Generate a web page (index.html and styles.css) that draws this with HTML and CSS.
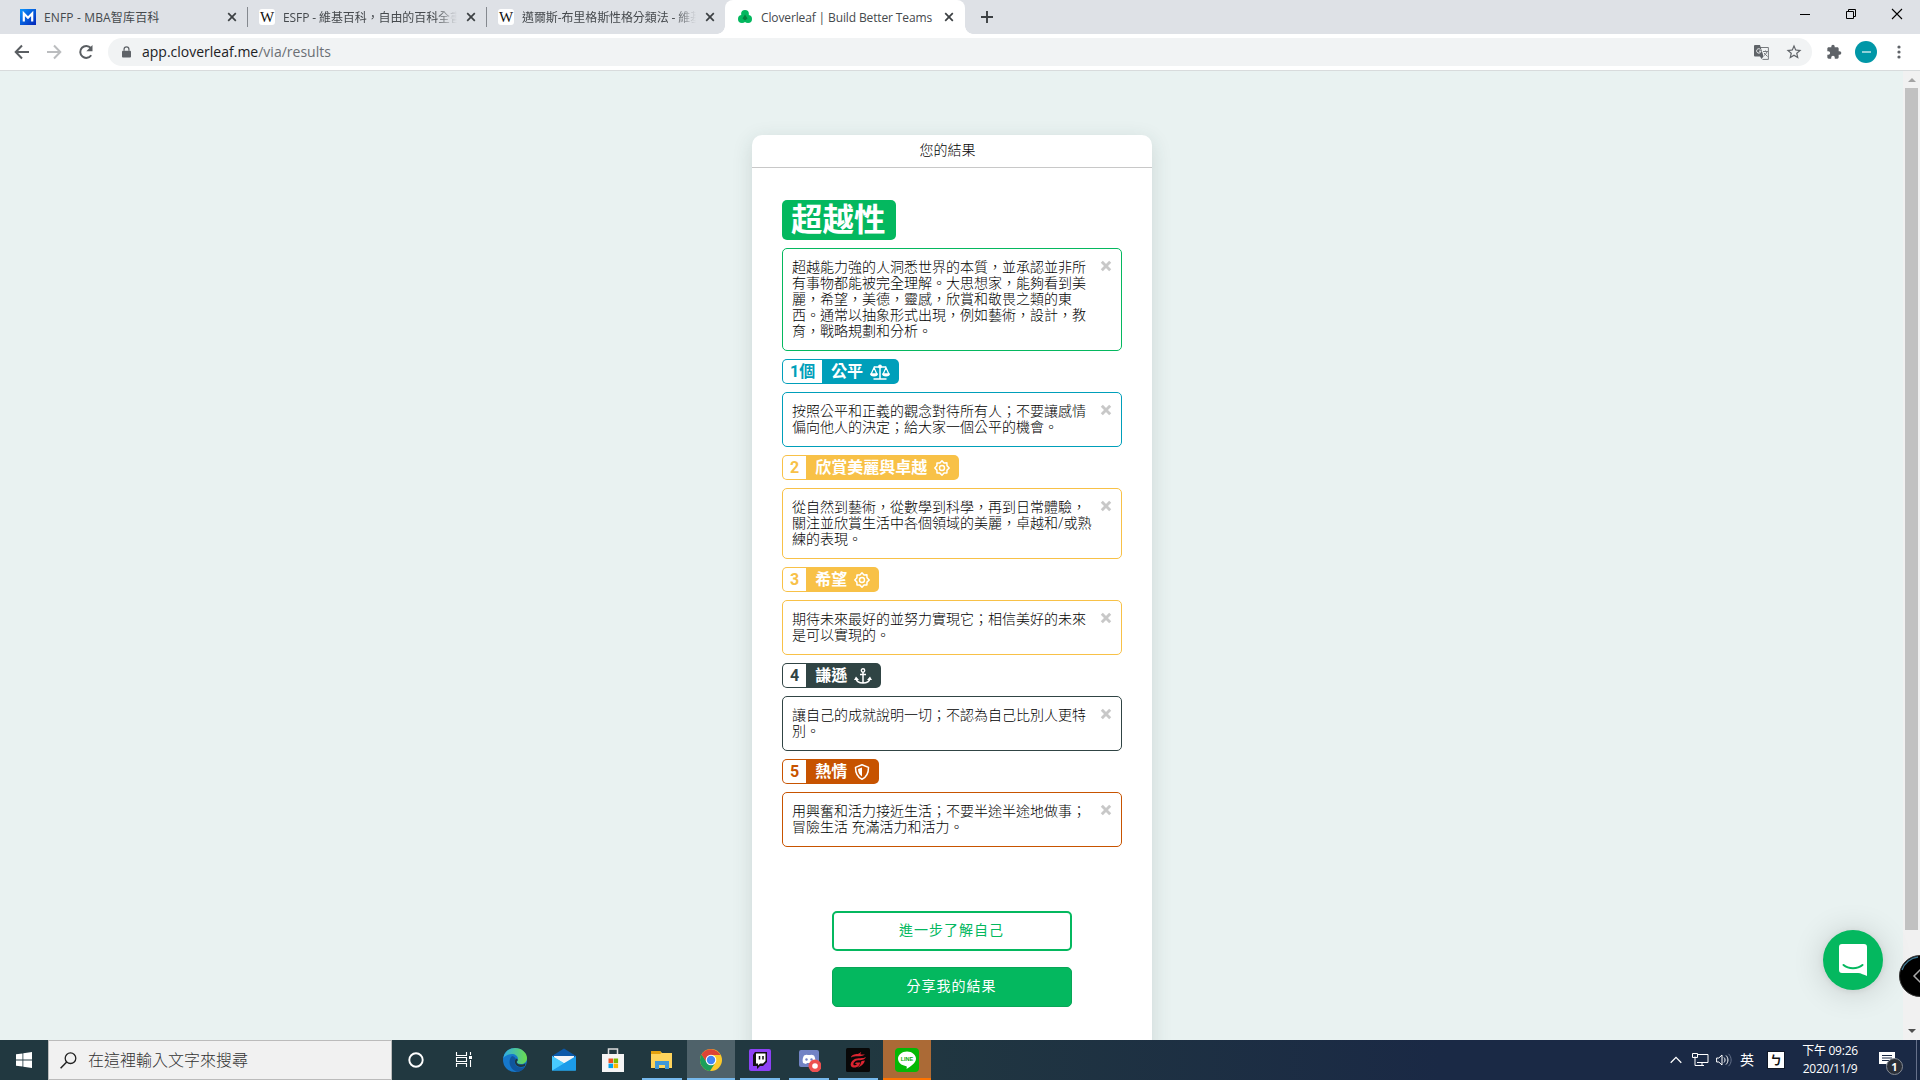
FILE: index.html
```html
<!DOCTYPE html>
<html lang="zh-Hant">
<head>
<meta charset="utf-8">
<title>Cloverleaf | Build Better Teams</title>
<link rel="stylesheet" href="styles.css">
</head>
<body>
<svg width="0" height="0" class="defs">
  <symbol id="x" viewBox="0 0 10 10"><path d="M1.2 1.2l7.6 7.6M8.8 1.2L1.2 8.8" fill="none" stroke="currentColor" stroke-width="1.7"/></symbol>
  <symbol id="bx" viewBox="0 0 12 12"><path d="M1.8 1.8l8.4 8.4M10.200 1.800L1.800 10.200" fill="none" stroke="#c8c8c8" stroke-width="2.900"/></symbol>
  <symbol id="gear" viewBox="0 0 16 16"><path d="M8 .8l2 2.100 2.900-.1.1 2.900L15.200 8 13 10.100l-.1 2.900-2.900.1-2 2.100-2.100-2.100-2.900-.1-.1-2.900L.8 8l2.100-2.200.1-2.900 2.900.1z" fill="none" stroke="#fff" stroke-width="1.500" stroke-linejoin="round"/><circle cx="8" cy="8" r="2.500" fill="none" stroke="#fff" stroke-width="1.400"/></symbol>
</svg>

<header class="tabs">
  <div class="tab t1">
    <svg class="fav" viewBox="0 0 16 16"><defs><linearGradient id="mb" x2="1" y2="1"><stop stop-color="#0a96ff"/><stop offset="1" stop-color="#0425b8"/></linearGradient></defs><path fill="url(#mb)" d="M0 0h16v16H0z"/><path d="M3.800 12.500v-8L8 8.800l4.200-4.300v8" fill="none" stroke="#fff" stroke-width="2.200"/></svg>
    <span class="label">ENFP - MBA智库百科</span><svg class="close"><use href="#x"/></svg>
  </div>
  <div class="tab t2"><span class="fav wiki">W</span><span class="label fade">ESFP - 維基百科，自由的百科全書</span><svg class="close"><use href="#x"/></svg></div>
  <div class="tab t3"><span class="fav wiki">W</span><span class="label fade">邁爾斯-布里格斯性格分類法 - 維基</span><svg class="close"><use href="#x"/></svg></div>
  <div class="tab active">
    <svg class="fav" viewBox="0 0 16 16"><g fill="#04b85f"><circle cx="8" cy="5" r="3.900"/><circle cx="5" cy="10" r="4"/><circle cx="11" cy="10" r="4"/><path d="M5 7h6v4H5z"/></g><path d="M8 5.500l2.500 4-2.500 2-2.500-2z" fill="#06803f"/></svg>
    <span class="label latin">Cloverleaf | Build Better Teams</span><svg class="close"><use href="#x"/></svg>
  </div>
  <svg class="plus" viewBox="0 0 12 12"><path d="M6 0v12M0 6h12" stroke="#3c4043" stroke-width="1.900"/></svg>
  <div class="winbtns">
    <svg viewBox="0 0 12 12"><path d="M1 6.500h10" stroke="#000"/></svg>
    <svg viewBox="0 0 12 12"><path d="M1.500 3.500h7v7h-7zM3.500 3.500v-2h7v7h-2" fill="none" stroke="#000"/></svg>
    <svg viewBox="0 0 12 12"><path d="M1 1l10 10M11 1L1 11" stroke="#000" stroke-width="1.100"/></svg>
  </div>
</header>

<div class="toolbar">
  <svg class="nav" viewBox="0 0 16 16"><path d="M15 8H2.500M8 1.500L1.700 8 8 14.500" fill="none" stroke="#5a5e62" stroke-width="2"/></svg>
  <svg class="nav" viewBox="0 0 16 16"><path d="M1 8h12.500M8 1.500L14.300 8 8 14.500" fill="none" stroke="#bbbdbf" stroke-width="2"/></svg>
  <svg class="nav" viewBox="0 0 16 16"><path d="M13.200 11.300A6 6 0 1 1 12.800 4" fill="none" stroke="#5a5e62" stroke-width="2"/><path d="M14.500 1v6.200H8.300z" fill="#5a5e62"/></svg>
  <div class="omnibox">
    <svg class="lock" viewBox="0 0 10 13"><path d="M1 5h8a1 1 0 0 1 1 1v5.500a1 1 0 0 1-1 1H1a1 1 0 0 1-1-1V6a1 1 0 0 1 1-1z" fill="#5f6368"/><path d="M2.300 5V3.500a2.700 2.700 0 0 1 5.400 0V5" fill="none" stroke="#5f6368" stroke-width="1.400"/></svg>
    <span class="url">app.cloverleaf.me<i>/via/results</i></span>
    <svg class="translate" viewBox="0 0 15 15"><path d="M5 2.500h9.400v11.900H8.500" fill="none" stroke="#777a7e"/><path d="M1 0h5l3.600 11.500H1a1 1 0 0 1-1-1V1a1 1 0 0 1 1-1zM6 11.500h3.500L7.500 14z" fill="#5f6368"/><path d="M6.500 4.500A2.200 2.200 0 1 0 7 6.200H5" stroke="#f1f3f4" fill="none"/><path d="M9 6.500h5M11.500 5.500v1M13 6.500c-.5 2-2 3.500-3 4M10 8l3.500 3.500" stroke="#777a7e" fill="none"/></svg>
    <svg class="star" viewBox="0 0 24 24"><path d="M22 9.240l-7.190-.62L12 2 9.190 8.630 2 9.240l5.460 4.730L5.820 21 12 17.270 18.180 21l-1.630-7.030L22 9.240zM12 15.400l-3.760 2.270 1-4.280-3.320-2.880 4.380-.38L12 6.100l1.710 4.040 4.380.38-3.320 2.880 1 4.280L12 15.400z" fill="#5f6368"/></svg>
  </div>
  <svg class="puzzle" viewBox="0 0 24 24"><path d="M20.500 11H19V7c0-1.100-.9-2-2-2h-4V3.500a2.500 2.500 0 0 0-5 0V5H4c-1.100 0-2 .9-2 2v3.800h1.500a2.700 2.700 0 0 1 0 5.400H2V20c0 1.100.9 2 2 2h3.800v-1.500a2.700 2.700 0 0 1 5.400 0V22H17c1.100 0 2-.9 2-2v-4h1.500a2.500 2.500 0 0 0 0-5z" fill="#5f6368"/></svg>
  <span class="avatar"></span>
  <svg class="dots" viewBox="0 0 4 14"><g fill="#5f6368"><circle cx="2" cy="2" r="1.600"/><circle cx="2" cy="7" r="1.600"/><circle cx="2" cy="12" r="1.600"/></g></svg>
</div>

<main class="page">
  <section class="card">
    <h1 class="cardhead">您的結果</h1>
    <div class="content">
      <div class="virtue">超越性</div>
      <div class="box green"><p>超越能力強的人洞悉世界的本質，並承認並非所<br>有事物都能被完全理解。大思想家，能夠看到美<br>麗，希望，美德，靈感，欣賞和敬畏之類的東<br>西。通常以抽象形式出現，例如藝術，設計，教<br>育，戰略規劃和分析。</p><svg class="dismiss"><use href="#bx"/></svg></div>
      <div class="badge teal"><b>1個</b><span>公平</span><svg class="w20" viewBox="0 0 20 16"><path d="M10 2v12.500M3.500 15h13M4 3h12" stroke="#fff" stroke-width="1.500"/><circle cx="10" cy="2.500" r="1.900" fill="#fff"/><path d="M4 3.500L1.200 10h5.600zM16 3.500L13.200 10h5.600z" fill="none" stroke="#fff" stroke-width="1.200"/><path d="M0 9.500h8a4 3 0 0 1-8 0zM12 9.500h8a4 3 0 0 1-8 0z" fill="#fff"/></svg></div>
      <div class="box teal"><p>按照公平和正義的觀念對待所有人；不要讓感情<br>偏向他人的決定；給大家一個公平的機會。</p><svg class="dismiss"><use href="#bx"/></svg></div>
      <div class="badge gold"><b>2</b><span>欣賞美麗與卓越</span><svg><use href="#gear"/></svg></div>
      <div class="box gold"><p>從自然到藝術，從數學到科學，再到日常體驗，<br>關注並欣賞生活中各個領域的美麗，卓越和/或熟<br>練的表現。</p><svg class="dismiss"><use href="#bx"/></svg></div>
      <div class="badge gold"><b>3</b><span>希望</span><svg><use href="#gear"/></svg></div>
      <div class="box gold"><p>期待未來最好的並努力實現它；相信美好的未來<br>是可以實現的。</p><svg class="dismiss"><use href="#bx"/></svg></div>
      <div class="badge dark"><b>4</b><span>謙遜</span><svg class="w18" viewBox="0 0 18 16"><circle cx="9" cy="2.400" r="1.700" fill="none" stroke="#fff" stroke-width="1.400"/><path d="M9 4v11M6 6.500h6M2 10.500c.6 3 3.500 4.500 7 4.500s6.400-1.500 7-4.500" fill="none" stroke="#fff" stroke-width="1.500"/><path d="M0 12l2-3.500L5 12zM18 12l-2-3.500L13 12z" fill="#fff"/></svg></div>
      <div class="box dark"><p>讓自己的成就說明一切；不認為自己比別人更特<br>別。</p><svg class="dismiss"><use href="#bx"/></svg></div>
      <div class="badge rust"><b>5</b><span>熱情</span><svg viewBox="0 0 16 16"><path d="M8 .8l6.500 2.600c0 6-2 9.700-6.500 11.800C3.500 13.100 1.500 9.400 1.500 3.400z" fill="none" stroke="#fff" stroke-width="1.500" stroke-linejoin="round"/><path d="M8 3.500v9C5.300 10.800 4.200 8.500 4 5z" fill="#fff"/></svg></div>
      <div class="box rust"><p>用興奮和活力接近生活；不要半途半途地做事；<br>冒險生活 充滿活力和活力。</p><svg class="dismiss"><use href="#bx"/></svg></div>
      <div class="actions"><button class="btn outline">進一步了解自己</button><button class="btn solid">分享我的結果</button></div>
    </div>
  </section>
  <div class="scroll"><i class="up"></i><i class="thumb"></i><i class="down"></i></div>
  <div class="chat"><svg viewBox="0 0 28 32"><path d="M3 0h22a3 3 0 0 1 3 3v29c-3-1-6-3-9-3H3a3 3 0 0 1-3-3V3a3 3 0 0 1 3-3z" fill="#fff"/><path d="M4.500 21c5 4.300 14 4.300 19 0" fill="none" stroke="#04b85f" stroke-width="2" stroke-linecap="round"/></svg></div>
  <div class="side"><svg viewBox="0 0 42 42"><circle cx="21" cy="21" r="20.500" fill="#000" stroke="#333"/><path d="M3 15a19 19 0 0 1 16-13" fill="none" stroke="#3d7893" stroke-width="1.300"/><path d="M22 14l-7 7 7 7" fill="none" stroke="#aaa" stroke-width="1.500"/></svg></div>
</main>

<footer class="taskbar">
  <div class="start"><svg viewBox="0 0 16 16"><path d="M0 2.300l6.500-.9v6.200H0zM7.300 1.300L16 0v7.600H7.300zM0 8.400h6.500v6.200L0 13.700zM7.300 8.400H16V16l-8.700-1.200z" fill="#fff"/></svg></div>
  <div class="search"><svg viewBox="0 0 17 17"><circle cx="10.500" cy="6.200" r="5.300" fill="none" stroke="#222" stroke-width="1.300"/><path d="M6.700 10L.6 16.200" stroke="#222" stroke-width="1.500"/></svg><span>在這裡輸入文字來搜尋</span></div>
  <nav class="apps">
    <div><svg viewBox="0 0 24 24"><circle cx="11" cy="12" r="6.700" fill="none" stroke="#fff" stroke-width="1.900"/></svg></div>
    <div><svg viewBox="0 0 24 24"><path d="M2.500 4v3.500h10V4M2.500 19v-3.500h10V19M2.500 9.500h10v4h-10zM16.500 4v3M16.500 12v7" fill="none" stroke="#fff" stroke-width="1.100"/><path d="M15 8h3v3h-3z" fill="#fff"/></svg></div>
    <div><svg viewBox="0 0 24 24"><defs><linearGradient id="eg"><stop stop-color="#2eabe8"/><stop offset="1" stop-color="#6bdd4c"/></linearGradient></defs><circle cx="12" cy="12" r="12" fill="#1678cb"/><path d="M.3 10C1.500 3 7 0 12 0c7 0 12 5 12 10 0 4-3 6-6 6-2.500 0-4-1-4-2 0-1 1-1 1-3 0-3-3-5-6-5-4 0-7 2-8.700 4z" fill="url(#eg)"/><path d="M9 8c-5 5-2 14 5 15.700 4 .2 7-2.700 8-5-2 1-7 1.600-9.500-1.700C11 14.500 12 12 13 11c-1-2-3-3-4-3z" fill="#10559d"/><path d="M14 13c-1 2 1 3.500 4 3.500 2 0 3.500-.5 4.500-1.500L22 18c-4 2-9 1-10-3-.5-2 .5-4 1.500-4.500L15 12z" fill="#203740"/></svg></div>
    <div><svg viewBox="0 0 24 24"><path d="M0 8l12-7.500L24 8v4H0z" fill="#0c58a8"/><path d="M2 8h20v7H2z" fill="#f3f4f6"/><path d="M0 8l24 14.500H0z" fill="#35bdf6"/><path d="M24 8v14.500H0z" fill="#1c9be9"/><path d="M0 8l12 7.300L0 22.500z" fill="#48caff"/></svg></div>
    <div><svg viewBox="0 0 24 24"><path d="M7.500 7V1h9v6" fill="none" stroke="#ddd" stroke-width="1.500"/><path d="M1 6h22v18H1z" fill="#f5f5f5"/><path d="M7.500 10.500H12V15H7.500z" fill="#ef5024"/><path d="M12.600 10.500h4.500V15h-4.500z" fill="#7db900"/><path d="M7.500 15.600H12v4.500H7.500z" fill="#03a3ed"/><path d="M12.600 15.600h4.500v4.500h-4.500z" fill="#fdb700"/></svg></div>
    <div class="run"><svg viewBox="0 0 24 24"><path d="M1 3h9l2 2h10v15H1z" fill="#ffd45c"/><path d="M1 3h9l1.500 2-1.500 1H1z" fill="#e5a20e"/><path d="M5 21v-8h14v8h-4v-4H9v4z" fill="#4198d8"/></svg></div>
    <div class="run current"><svg viewBox="0 0 24 24"><circle cx="12" cy="12" r="11" fill="#fbc92b"/><path d="M2.500 6.500A11 11 0 0 0 11 23l5.500-8.500L12 12 8 14z" fill="#1b9f5a"/><path d="M2.500 6.500A11 11 0 0 1 21.500 7H12L7.500 14z" fill="#dd4437"/><circle cx="12" cy="12" r="5.300" fill="#fff"/><circle cx="12" cy="12" r="4.200" fill="#4285f4"/></svg></div>
    <div class="run"><svg viewBox="0 0 24 24"><rect x="1" y="1" width="22" height="22" rx="2" fill="#8d42f5"/><path d="M7 4h12v10l-4 4h-3l-3 3v-3H5V7z" fill="#111"/><path d="M8 5.500h9.500V13L15 15.500h-3l-2 2v-2H8z" fill="#fff"/><path d="M11.500 8v3.500M15 8v3.500" stroke="#111" stroke-width="1.500"/></svg></div>
    <div class="run"><svg viewBox="0 0 24 24"><path d="M4 2h16a2 2 0 0 1 2 2v17l-4-2H4a2 2 0 0 1-2-2V4a2 2 0 0 1 2-2z" fill="#7283c5"/><path d="M6 15c-1-3 0-6 1-7.500 2-1 3-1 3.500-.5h3c.5-.5 1.500-.5 3.500.5 1 2 2 4.500 1 7.500l-3 1-1-1h-4l-1 1z" fill="#fff"/><circle cx="9.500" cy="11.500" r="1.200" fill="#7283c5"/><circle cx="14.500" cy="11.500" r="1.200" fill="#7283c5"/><circle cx="18" cy="18" r="6.500" fill="#ed5050"/><circle cx="18" cy="18" r="2.800" fill="#fff"/></svg></div>
    <div class="run"><svg viewBox="0 0 24 24"><rect width="24" height="24" rx="1.500" fill="#080808"/><g fill="#dc2430"><path d="M15 4c-2 2.500-5 1.500-8 3-1.500.7-2 1.700-2 2.500 4-2.300 9 0 14-3-2 .2-4 0-5-.5 1-.5 1.300-1.200 1-2z"/><path d="M20 9c-3 2-8 .3-12 2.500-3 1.700-4 4.500-3 6.500 1.300 2.300 6 2 8-.5l1.500-3H10l-1 1.500h2c-1 1.500-3 1.800-3.500.7C7 15 9 12.700 12 12.300c3-.3 6 .2 8-3.300z"/><path d="M15.500 13l3.500-.5c-1 3.500-4 6-7.500 7.200 2.200-1.700 3.500-4.200 4-6.700z"/></g></svg></div>
    <div class="run line"><svg viewBox="0 0 24 24"><rect width="24" height="24" rx="4" fill="#05b805"/><path d="M12 3.500c5 0 9 3.300 9 7.300 0 4.200-5.500 7.700-9.500 10.200.5-2 .5-2.700-1-3-4-.6-7.500-3.500-7.500-7.200 0-4 4-7.300 9-7.300z" fill="#fff"/><text x="12" y="13" text-anchor="middle" font-size="5.500" font-weight="700" fill="#05a805" font-family="Liberation Sans, sans-serif">LINE</text></svg></div>
  </nav>
  <div class="tray">
    <svg class="chev" viewBox="0 0 12 8"><path d="M.7 6.700L6 1.400l5.300 5.300" fill="none" stroke="#fff" stroke-width="1.300"/></svg>
    <svg class="net" viewBox="0 0 17 14"><path d="M6 1.500h10v8H5M3 3.500v9h9M10 9.500v3M.5.5h5v4h-5z" fill="none" stroke="#fff"/></svg>
    <svg class="vol" viewBox="0 0 16 14"><path d="M.6 5h2.200L6 2v10L2.800 9H.6z" fill="none" stroke="#fff"/><path d="M8 4.500c1.400 1.300 1.400 3.700 0 5M10 2.500c2.600 2.500 2.600 6.500 0 9" fill="none" stroke="#fff"/><path d="M12.500.8c3.500 3.500 3.500 9 0 12.400" fill="none" stroke="#66728a"/></svg>
    <span class="lang">英</span><span class="ime">ㄅ</span>
    <div class="clock"><span>下午 09:26</span><span>2020/11/9</span></div>
    <div class="notif"><svg viewBox="0 0 16 16"><path d="M0 0h16v12h-5v4l-4-4H0z" fill="#fff"/><path d="M3 3.500h10M3 6h10M3 8.500h7" stroke="#1a2944"/></svg><em>1</em></div>
  </div>
</footer>
</body>
</html>
```
FILE: styles.css
```css
* { box-sizing: border-box; }
body { margin: 0; width: 1920px; height: 1080px; overflow: hidden; display: flex; flex-direction: column; font-family: "Open Sans", "Noto Sans CJK TC", sans-serif; color: #000; }
svg { display: block; flex: none; }
.defs { position: absolute; }
i, em { font-style: normal; }

/* Browser tabs */
.tabs { height: 34px; flex: none; display: flex; align-items: center; background: #dee1e6; }
.tab { display: flex; align-items: center; height: 34px; font-size: 12px; color: #45494d; position: relative; }
.t1 { width: 248px; padding-left: 20px; }
.t2, .t3 { width: 239px; padding-left: 11px; }
.t1::after, .t2::after { content: ""; position: absolute; right: 0; top: 7px; width: 1px; height: 20px; background: #85898f; }
.fav { width: 16px; height: 16px; margin-right: 8px; flex: none; }
.wiki { background: #fff; border-radius: 3px; font: 400 15px/16px "Liberation Serif", serif; color: #111; text-align: center; }
.label { width: 174px; white-space: nowrap; overflow: hidden; line-height: 18px; padding-top: 1px; }
.t1 .label { width: 183px; letter-spacing: .15px; }
.latin { letter-spacing: -.13px; }
.fade { letter-spacing: -.1px; -webkit-mask-image: linear-gradient(90deg, #000 88%, transparent); mask-image: linear-gradient(90deg, #000 88%, transparent); }
.close { width: 10px; height: 10px; margin-left: 9px; color: #3c4043; }
.t1 .close { margin-left: 0; }
.active { width: 240px; margin-left: -1px; padding-left: 12px; background: #fff; border-radius: 8px 8px 0 0; }
.active::before, .active::after { content: ""; position: absolute; bottom: 0; width: 8px; height: 8px; }
.active::before { left: -8px; background: radial-gradient(circle at 0 0, transparent 7.500px, #fff 8px); }
.active::after { right: -8px; background: radial-gradient(circle at 100% 0, transparent 7.500px, #fff 8px); }
.plus { width: 12px; height: 12px; margin-left: 16px; }
.winbtns { margin-left: auto; display: flex; gap: 34px; padding: 0 17px 6px 0; }
.winbtns svg { width: 12px; height: 12px; }

/* Browser toolbar */
.toolbar { height: 37px; flex: none; display: flex; align-items: center; background: #fff; border-bottom: 1px solid #d8dbdc; padding-left: 14px; }
.nav { width: 16px; height: 16px; margin-right: 16px; }
.omnibox { width: 1704px; height: 28px; margin-left: -2px; border-radius: 14px; background: #f1f3f4; display: flex; align-items: center; padding: 0 9px 0 14px; }
.lock { width: 9px; height: 12px; margin-right: 11px; }
.url { font-size: 14px; color: #202124; flex: 1; line-height: 24px; }
.url i { color: #6b6f74; }
.translate { width: 15px; height: 15px; margin-right: 16px; }
.star { width: 18px; height: 18px; }
.puzzle { width: 16px; height: 16px; margin-left: 14px; }
.avatar { width: 22px; height: 22px; border-radius: 50%; background: #0097a7; margin-left: 13px; display: flex; align-items: center; justify-content: center; }
.avatar::after { content: ""; width: 9px; height: 2px; background: #8fd0d8; }
.dots { width: 4px; height: 14px; margin-left: 20px; }

/* Page */
.page { height: 969px; flex: none; background: #e9f2f1; position: relative; overflow: hidden; display: flex; justify-content: space-between; }
.card { width: 400px; height: 930px; margin: 64px 0 0 752px; background: #fff; border-radius: 10px; box-shadow: 0 5px 20px rgba(40, 70, 70, .15); font-family: Roboto, "Noto Sans CJK TC", sans-serif; }
.cardhead { margin: 0; height: 33px; border-bottom: 1px solid #c8c8c8; text-align: center; padding-right: 9px; font-size: 14px; font-weight: 300; line-height: 30px; }
.content { padding: 32px 30px 0; display: flex; flex-direction: column; align-items: flex-start; gap: 8px; }
.virtue { width: 114px; height: 40px; padding: 2px 0 0 9px; border-radius: 5px; background: #04b85f; color: #fff; font-size: 31.500px; font-weight: 700; line-height: 38px; }
.green { --c: #04b85f; } .teal { --c: #009fba; } .gold { --c: #f8c147; } .dark { --c: #304444; } .rust { --c: #c75300; }
.box { width: 340px; border: 1px solid var(--c); border-radius: 5px; padding: 10px 9px 11px; display: flex; justify-content: space-between; }
.box p { margin: 0; width: 302px; font-size: 14px; font-weight: 300; line-height: 16px; white-space: nowrap; }
.dismiss { width: 12px; height: 12px; margin-top: 1px; }
.badge { height: 25px; display: flex; align-items: center; background: var(--c); border-radius: 5px; color: #fff; padding: 1px 9px 1px 1px; font-size: 16px; }
.badge b { height: 23px; min-width: 23px; padding: 1px 7px 0; background: #fff; color: var(--c); border-radius: 4px 0 0 4px; line-height: 23px; font: 700 16px/22px "Liberation Sans Narrow", Roboto, "Noto Sans CJK TC", sans-serif; text-align: center; white-space: nowrap; }
.badge.teal b { width: 39px; }
.badge span { margin: 0 7px 0 9px; font-weight: 700; line-height: 24px; height: 23px; }
.badge svg { width: 16px; height: 16px; }
.badge .w20 { width: 20px; }
.badge .w18 { width: 18px; }
.actions { align-self: center; display: flex; flex-direction: column; gap: 16px; margin-top: 56px; }
.btn { width: 240px; height: 40px; border: 2px solid #04b85f; border-radius: 5px; padding: 0 1px 4px 0; font: 400 14px "Noto Sans CJK TC", sans-serif; letter-spacing: 1px; }
.outline { background: #fff; color: #04b85f; }
.solid { background: #04b85f; border: 1px solid #08a657; color: #fff; }
.scroll { width: 17px; background: #f1f1f1; display: flex; flex-direction: column; align-items: center; padding: 7px 0; }
.up, .down { border: 4px solid transparent; border-top: 0; border-bottom: 4px solid #a3a3a3; }
.thumb { width: 13px; height: 842px; background: #c1c1c1; margin: 6px 0 auto; }
.down { border-bottom: 0; border-top: 4px solid #505050; }
.chat { position: absolute; left: 1823px; top: 859px; width: 60px; height: 60px; border-radius: 50%; background: #04b85f; box-shadow: 0 1px 6px rgba(0, 0, 0, .08), 0 2px 32px rgba(0, 0, 0, .16); padding: 14px 16px; }
.chat svg { width: 28px; height: 32px; }
.side { position: absolute; left: 1899px; top: 884px; width: 42px; height: 42px; }

/* Taskbar */
.taskbar { height: 40px; flex: none; display: flex; align-items: center; background: linear-gradient(90deg, #213840 0, #213840 45%, #1a2945 75%, #1a2945); color: #fff; font-family: "Open Sans", "Noto Sans CJK TC", sans-serif; }
.start { width: 48px; padding-left: 16px; }
.start svg { width: 16px; height: 16px; }
.search { width: 344px; height: 40px; background: #f1f1f1; border: 1px solid #bbb; color: #333; display: flex; align-items: center; padding-left: 11px; font-size: 16px; font-weight: 300; }
.search svg { width: 17px; height: 17px; margin-right: 11px; }
.search span { padding-bottom: 2px; }
.apps { display: flex; gap: 1px; padding-left: 1px; }
.apps div { width: 48px; height: 40px; display: flex; align-items: center; justify-content: center; position: relative; }
.apps svg { width: 24px; height: 24px; }
.run::after { content: ""; position: absolute; left: 4px; right: 4px; bottom: 0; height: 2px; background: #76b9ed; }
.current { background: #4f626a; }
.current::after, .line::after { left: 0; right: 0; }
.line { background: #ab6a36; }
.line::after { background: #ff7400; }
.tray { margin-left: auto; height: 40px; display: flex; align-items: center; border-right: 1px solid #66718a; margin-right: 3px; }
.chev { width: 12px; height: 8px; margin-right: 10px; }
.net { width: 17px; height: 14px; margin-right: 7px; }
.vol { width: 16px; height: 14px; margin-right: 8px; }
.lang { font-size: 14px; line-height: 20px; width: 14px; margin-right: 14px; }
.ime { width: 16px; height: 16px; background: #fff; color: #111; outline: 1px solid #101827; font: 700 12px/15px "Noto Sans CJK TC", sans-serif; text-align: center; margin-right: 16px; }
.clock { width: 60px; display: flex; flex-direction: column; align-items: center; font-size: 12px; line-height: 18px; letter-spacing: -.25px; white-space: nowrap; }
.notif { position: relative; width: 37px; height: 16px; margin-left: 19px; }
.notif svg { width: 16px; height: 16px; }
.notif em { position: absolute; left: 7px; top: 6px; width: 17px; height: 17px; border-radius: 50%; border: 1px solid #858b95; background: #2a2f38; font: 700 11px/15px "Open Sans", sans-serif; text-align: center; }
```
